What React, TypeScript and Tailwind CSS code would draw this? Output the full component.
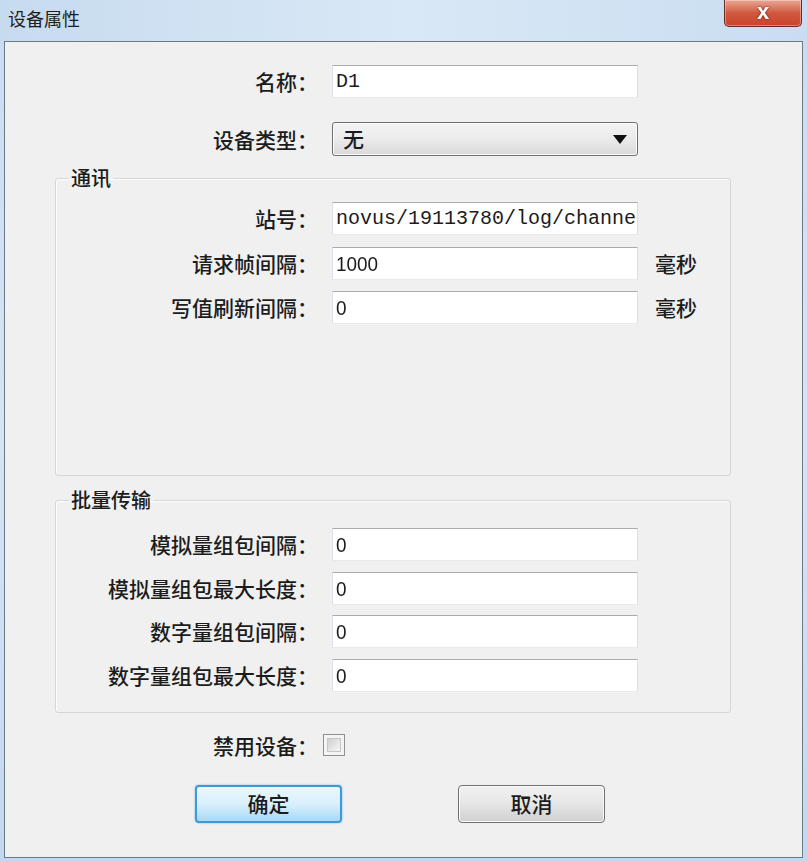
import React from 'react';

const cjk = 'font-["Noto_Sans_CJK_SC",sans-serif]';

const Field: React.FC<{ label: string; value: string; labelW: string; mt: string; mono?: boolean; unit?: string }> = ({ label, value, labelW, mt, mono, unit }) => {
    return (
        <div className={`flex items-center ${mt}`}>
            <div className={`${labelW} text-right text-[21px] leading-[33px] text-[#1c1c1c] font-medium ${cjk}`}>
                {label}
            </div>
            <div
                className="ml-[14px] w-[306px] h-[33px] shrink-0 bg-white border border-t-[#a9abb1] border-x-[#dcdfe5] border-b-[#e6e9ee] flex items-center pl-[3px] text-[#1c1c1c]">
                <span className={mono ? 'font-["Liberation_Mono",monospace] text-[20px]' : 'font-["Liberation_Sans",sans-serif] text-[21px] inline-block scale-x-[0.9] origin-left'}>
                    {value}
                </span>
            </div>
            {unit && (
                <div className={`ml-[17px] text-[21px] font-medium text-[#1c1c1c] ${cjk}`}>{unit}</div>
            )}
        </div>
    );
};

const App: React.FC = () => {
    return (
        <div className="w-[807px] h-[862px] overflow-hidden flex flex-col bg-gradient-to-b from-[#c9dcf0] via-[#d6e5f5] to-[#c3d8ee]">
            {/* title bar */}
            <div className="h-[41px] flex items-start bg-gradient-to-r from-[#c7dbef] via-[#d9e8f6] to-[#c9ddf1]">
                <span className={`ml-[8px] mt-[6px] text-[18px] leading-[24px] text-[#1e1e1e] ${cjk}`}>设备属性</span>
                <div
                    className="ml-auto mr-[5px] w-[78px] h-[27px] rounded-b-[5px] border border-t-0 border-[#6b2a20] bg-gradient-to-b from-[#e9a896] via-[#d0583f] to-[#c9432c] flex items-center justify-center shadow-[inset_0_0_0_1px_rgba(255,255,255,0.35)]">
                    <span className="text-white font-bold text-[22px] leading-none -mt-[3px] font-['Liberation_Sans',sans-serif] drop-shadow-[0_0_1px_#5a1a10]">x</span>
                </div>
            </div>

            {/* client area */}
            <div className="mx-[4px] h-[817px] border border-[#6c7a88] bg-[#f0f0f0] flex flex-col">
                <Field label="名称：" value="D1" labelW="w-[313px]" mt="mt-[23px]" mono/>

                <div className="flex items-center mt-[24px]">
                    <div className={`w-[313px] text-right text-[21px] leading-[34px] text-[#1c1c1c] font-medium ${cjk}`}>设备类型：</div>
                    <div
                        className="ml-[14px] w-[306px] h-[34px] rounded-[3px] border border-[#707070] bg-gradient-to-b from-[#f3f3f3] via-[#ebebeb] to-[#d9d9d9] flex items-center pl-[10px] pr-[10px] shadow-[inset_0_0_0_1px_#fcfcfc]">
                        <span className={`text-[21px] font-medium text-[#1c1c1c] ${cjk}`}>无</span>
                        <svg className="ml-auto" width="14" height="9" viewBox="0 0 14 9">
                            <path d="M0 0 H14 L7 9 Z" fill="#111"/>
                        </svg>
                    </div>
                </div>

                <fieldset className="mt-[10px] ml-[50px] w-[676px] border border-[#d6d6d6] rounded-[3px] pb-[151px] shadow-[inset_1px_1px_0_#fdfdfd]">
                    <legend className={`ml-[13px] px-[2px] text-[20px] leading-[24px] font-medium text-[#1c1c1c] ${cjk}`}>通讯</legend>
                    <Field label="站号：" value="novus/19113780/log/channe" labelW="w-[262px]" mt="mt-[12px]" mono/>
                    <Field label="请求帧间隔：" value="1000" labelW="w-[262px]" mt="mt-[12px]" unit="毫秒"/>
                    <Field label="写值刷新间隔：" value="0" labelW="w-[262px]" mt="mt-[11px]" unit="毫秒"/>
                </fieldset>

                <fieldset className="mt-[12px] ml-[50px] w-[676px] border border-[#d6d6d6] rounded-[3px] pb-[20px] shadow-[inset_1px_1px_0_#fdfdfd]">
                    <legend className={`ml-[13px] px-[2px] text-[20px] leading-[24px] font-medium text-[#1c1c1c] ${cjk}`}>批量传输</legend>
                    <Field label="模拟量组包间隔：" value="0" labelW="w-[262px]" mt="mt-[16px]"/>
                    <Field label="模拟量组包最大长度：" value="0" labelW="w-[262px]" mt="mt-[11px]"/>
                    <Field label="数字量组包间隔：" value="0" labelW="w-[262px]" mt="mt-[10px]"/>
                    <Field label="数字量组包最大长度：" value="0" labelW="w-[262px]" mt="mt-[11px]"/>
                </fieldset>

                <div className="flex items-center mt-[21px]">
                    <div className={`w-[313px] text-right text-[21px] leading-[22px] font-medium text-[#1c1c1c] ${cjk}`}>禁用设备：</div>
                    <div className="ml-[5px] w-[22px] h-[22px] border border-[#8f8f8f] bg-[#f4f4f4] p-[3px]">
                        <div className="w-full h-full border border-[#c6c6c6] bg-gradient-to-br from-[#d0d0d0] to-[#f6f6f6]"/>
                    </div>
                </div>

                <div className="flex mt-[29px]">
                    <button
                        className={`ml-[190px] w-[147px] h-[38px] rounded-[4px] border-2 border-[#3d9ad4] bg-gradient-to-b from-[#eaf6fd] via-[#d9f0fc] to-[#a7d9f5] shadow-[0_0_2px_#5fb4e8] text-[21px] font-medium text-[#1c1c1c] ${cjk}`}>
                        确定
                    </button>
                    <button
                        className={`ml-[116px] w-[147px] h-[38px] rounded-[4px] border border-[#707070] bg-gradient-to-b from-[#f2f2f2] via-[#e6e6e6] to-[#cfcfcf] shadow-[inset_0_0_0_1px_#fbfbfb] text-[21px] font-medium text-[#1c1c1c] ${cjk}`}>
                        取消
                    </button>
                </div>
            </div>
        </div>
    );
};

export default App;
